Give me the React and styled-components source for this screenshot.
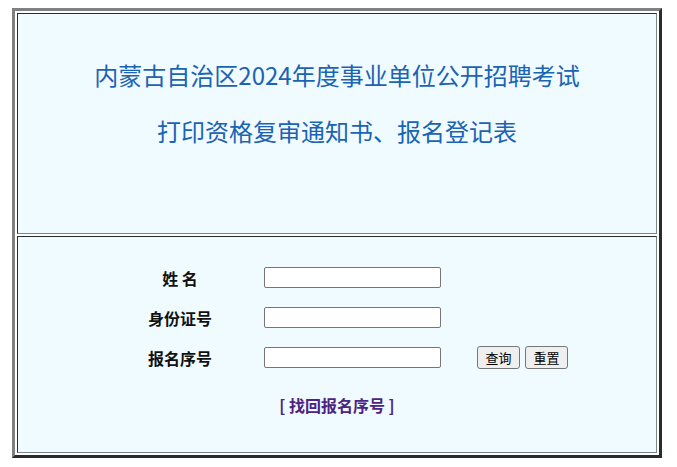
import React from 'react';
import styled, { createGlobalStyle } from 'styled-components';

const GlobalStyle = createGlobalStyle`
  body {
    margin: 8px 0 0 12px;
    background: #ffffff;
    font-family: "Noto Sans CJK SC", "Noto Sans", sans-serif;
  }
`;

const Frame = styled.div`
  width: 650px;
  box-sizing: border-box;
  border: 3px solid;
  border-color: #808080 #2b2b2b #2b2b2b #808080;
  padding: 2px;
  display: flex;
  flex-direction: column;
  gap: 2px;
  background: #ffffff;
`;

const Cell = styled.div`
  box-sizing: border-box;
  height: ${(p) => p.$height}px;
  border: 1px solid;
  border-color: #243030 #7b8787 #7b8787 #243030;
  background: #f0fbff;
`;

const Heading = styled.div`
  padding-top: 46px;
  text-align: center;
  color: #1b63b3;
`;

const Title = styled.div`
  font-size: 24px;
  line-height: 30px;
  margin-bottom: ${(p) => p.$after || 0}px;
`;

const Form = styled.div`
  display: grid;
  grid-template-columns: 128px 177px auto;
  grid-auto-rows: 21px;
  column-gap: 20px;
  row-gap: 19px;
  align-items: center;
  padding: 30px 0 0 98px;
`;

const Label = styled.div`
  text-align: center;
  font-size: 16px;
  font-weight: bold;
  color: #111111;
  white-space: pre;
`;

const Field = styled.input`
  box-sizing: border-box;
  width: 177px;
  height: 21px;
  margin: 0;
  border: 1px solid #767676;
  border-radius: 2px;
  background: #ffffff;
`;

const Actions = styled.div`
  display: flex;
  gap: 5px;
  padding-left: 16px;
`;

const Button = styled.button`
  box-sizing: border-box;
  width: 43px;
  height: 23px;
  padding: 0;
  font-family: "Noto Sans CJK SC", sans-serif;
  font-size: 13px;
  color: #000000;
  background: #efefef;
  border: 1px solid #767676;
  border-radius: 3px;
`;

const Recover = styled.a`
  display: block;
  margin-top: 27px;
  text-align: center;
  font-size: 16px;
  font-weight: bold;
  color: #4d2383;
  text-decoration: none;
  line-height: 20px;
`;

const fields = [
  { label: '姓 名' },
  { label: '身份证号' },
  { label: '报名序号', actions: true },
];

export default function App() {
  return (
    <>
      <GlobalStyle />
      <Frame>
        <Cell $height={221}>
          <Heading>
            <Title $after={26}>内蒙古自治区2024年度事业单位公开招聘考试</Title>
            <Title>打印资格复审通知书、报名登记表</Title>
          </Heading>
        </Cell>
        <Cell $height={217}>
          <Form>
            {fields.map((f) => (
              <React.Fragment key={f.label}>
                <Label>{f.label}</Label>
                <Field type="text" />
                {f.actions ? (
                  <Actions>
                    <Button type="button">查询</Button>
                    <Button type="button">重置</Button>
                  </Actions>
                ) : (
                  <span />
                )}
              </React.Fragment>
            ))}
          </Form>
          <Recover href="#">[ 找回报名序号 ]</Recover>
        </Cell>
      </Frame>
    </>
  );
}
